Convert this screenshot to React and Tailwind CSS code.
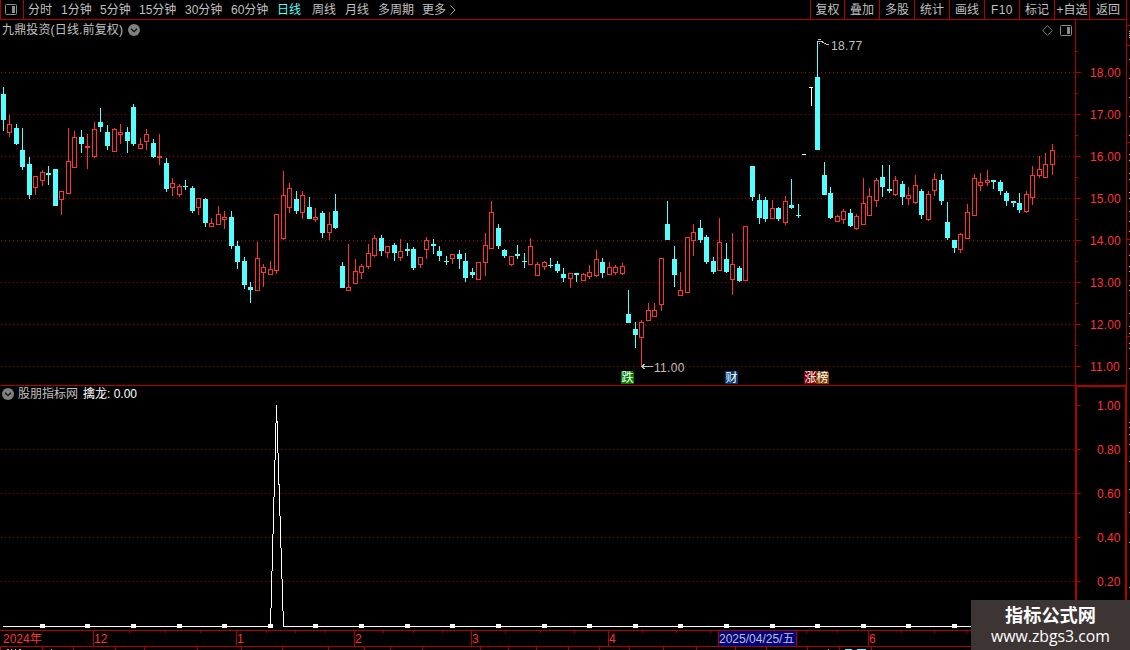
import clsx from "clsx";

// [x, high, open/close top, open/close bottom, low, rising]
const candles = [
  [3, 87, 94, 120, 131, 0], [9, 115, 124, 133, 137, 1], [16, 124, 128, 144, 145, 0], [22, 128, 150, 167, 170, 0],
  [29, 157, 164, 195, 199, 0], [35, 176, 176, 188, 195, 1], [42, 170, 172, 181, 186, 1], [48, 166, 173, 175, 185, 0],
  [55, 169, 169, 206, 206, 0], [61, 191, 191, 200, 215, 1], [68, 128, 161, 194, 194, 1], [74, 131, 137, 168, 168, 1],
  [81, 130, 137, 144, 153, 0], [87, 134, 146, 148, 169, 1], [94, 122, 129, 157, 158, 1], [100, 108, 122, 127, 132, 0],
  [107, 125, 132, 146, 150, 0], [114, 128, 129, 152, 152, 1], [120, 124, 132, 135, 144, 1], [127, 127, 132, 141, 153, 0],
  [133, 104, 107, 144, 146, 0], [140, 138, 144, 149, 149, 1], [146, 129, 134, 142, 150, 1], [153, 139, 143, 157, 158, 0],
  [159, 134, 156, 158, 165, 1], [166, 158, 163, 189, 192, 0], [172, 178, 183, 188, 196, 1], [179, 184, 186, 195, 197, 1],
  [185, 180, 186, 187, 190, 0], [192, 186, 188, 211, 213, 0], [198, 198, 198, 208, 215, 1], [205, 198, 199, 223, 227, 0],
  [211, 218, 223, 227, 227, 1], [218, 206, 214, 225, 225, 1], [224, 211, 217, 220, 229, 1], [231, 211, 217, 246, 249, 0],
  [237, 241, 246, 262, 269, 0], [244, 257, 261, 285, 289, 0], [250, 282, 287, 290, 303, 0], [257, 242, 258, 291, 291, 1],
  [263, 264, 267, 273, 287, 1], [270, 261, 269, 275, 275, 1], [276, 214, 214, 271, 274, 1], [283, 171, 195, 239, 240, 1],
  [289, 183, 188, 208, 213, 1], [296, 191, 199, 211, 214, 0], [302, 191, 195, 213, 219, 1], [309, 197, 207, 219, 219, 0],
  [315, 208, 217, 220, 222, 1], [322, 211, 213, 233, 238, 0], [329, 212, 224, 233, 240, 1], [335, 194, 211, 228, 229, 0],
  [342, 262, 266, 288, 288, 0], [348, 244, 287, 291, 291, 1], [355, 259, 271, 284, 284, 1], [361, 264, 266, 273, 279, 1],
  [368, 244, 253, 267, 269, 1], [374, 235, 238, 256, 257, 1], [381, 235, 238, 251, 256, 0], [387, 246, 246, 253, 258, 1],
  [394, 243, 245, 253, 261, 0], [400, 239, 251, 258, 261, 1], [407, 243, 249, 251, 256, 0], [413, 247, 249, 268, 270, 0],
  [420, 257, 257, 265, 268, 1], [426, 237, 240, 250, 259, 1], [433, 239, 244, 246, 254, 0], [439, 246, 251, 256, 261, 0],
  [446, 256, 261, 262, 265, 0], [452, 254, 254, 259, 264, 1], [459, 250, 254, 259, 269, 0], [465, 253, 261, 278, 282, 0],
  [472, 268, 272, 275, 278, 0], [478, 262, 262, 280, 280, 1], [485, 233, 245, 263, 276, 1], [491, 201, 212, 249, 249, 1],
  [498, 224, 228, 246, 249, 0], [504, 249, 250, 256, 258, 0], [511, 256, 256, 265, 266, 1], [517, 245, 254, 256, 259, 0],
  [524, 253, 261, 262, 268, 0], [530, 238, 246, 265, 265, 1], [537, 262, 264, 276, 276, 1], [544, 261, 262, 267, 270, 1],
  [550, 258, 265, 266, 268, 0], [557, 261, 264, 271, 273, 0], [563, 268, 274, 278, 282, 0], [570, 273, 273, 279, 288, 1],
  [576, 273, 273, 275, 282, 0], [583, 273, 274, 281, 281, 1], [589, 265, 272, 277, 279, 1], [596, 250, 259, 276, 277, 1],
  [602, 258, 262, 273, 278, 0], [609, 262, 267, 275, 275, 1], [615, 265, 267, 273, 275, 1], [622, 263, 266, 274, 275, 1],
  [628, 290, 314, 323, 323, 0], [635, 322, 329, 335, 348, 0], [641, 320, 322, 338, 367, 1], [648, 303, 310, 321, 321, 1],
  [654, 303, 310, 317, 317, 1], [661, 258, 258, 305, 311, 1], [667, 201, 224, 240, 240, 0], [674, 246, 259, 275, 287, 0],
  [680, 272, 290, 296, 296, 1], [687, 237, 237, 293, 293, 1], [693, 224, 232, 241, 256, 1], [700, 220, 228, 240, 243, 0],
  [706, 235, 237, 262, 264, 0], [713, 257, 261, 272, 274, 0], [719, 218, 242, 271, 271, 1], [726, 243, 259, 272, 273, 0],
  [732, 233, 264, 280, 295, 1], [739, 266, 268, 281, 282, 0], [745, 226, 226, 281, 281, 1], [752, 166, 166, 197, 201, 0],
  [759, 194, 200, 218, 224, 0], [765, 197, 200, 219, 222, 0], [772, 200, 208, 219, 219, 1], [778, 207, 208, 219, 221, 0],
  [785, 196, 201, 223, 225, 1], [791, 179, 205, 208, 209, 0], [798, 204, 215, 216, 218, 0], [817, 41, 77, 150, 150, 0],
  [824, 162, 175, 195, 195, 0], [830, 187, 193, 218, 219, 0], [837, 215, 216, 222, 222, 1], [843, 209, 211, 220, 224, 1],
  [850, 209, 213, 226, 227, 0], [856, 214, 216, 229, 230, 1], [863, 178, 203, 225, 225, 1], [869, 188, 196, 216, 216, 1],
  [876, 178, 180, 201, 207, 1], [882, 165, 177, 187, 197, 0], [889, 165, 189, 191, 193, 0], [895, 176, 180, 195, 196, 1],
  [902, 181, 184, 197, 205, 0], [908, 187, 195, 199, 205, 1], [915, 175, 185, 203, 204, 1], [921, 189, 191, 215, 219, 0],
  [928, 191, 194, 220, 221, 1], [934, 173, 179, 191, 196, 1], [941, 174, 180, 201, 205, 0], [947, 202, 222, 238, 240, 0],
  [954, 240, 240, 248, 253, 0], [960, 233, 234, 250, 253, 1], [967, 204, 212, 239, 239, 1], [974, 174, 178, 216, 216, 1],
  [980, 173, 182, 186, 191, 1], [987, 170, 180, 183, 186, 1], [993, 180, 180, 182, 189, 0], [1000, 180, 182, 191, 195, 0],
  [1006, 191, 193, 201, 206, 0], [1013, 201, 201, 203, 207, 0], [1019, 193, 203, 210, 213, 0], [1026, 191, 194, 212, 213, 1],
  [1032, 166, 175, 198, 205, 1], [1039, 156, 169, 176, 178, 1], [1045, 153, 164, 178, 178, 1], [1052, 144, 150, 165, 175, 1],
];

const periods = [
  ["分时", "w-[33px]"],
  ["1分钟", "w-[39px]"],
  ["5分钟", "w-[39px]"],
  ["15分钟", "w-[46px]"],
  ["30分钟", "w-[46px]"],
  ["60分钟", "w-[46px]"],
  ["日线", "w-[35px]"],
  ["周线", "w-[33px]"],
  ["月线", "w-[33px]"],
  ["多周期", "w-[44px]"],
  ["更多", "w-[27px]"],
];

const tools = [
  ["复权", "w-[34px]"],
  ["叠加", "w-[35px]"],
  ["多股", "w-[35px]"],
  ["统计", "w-[35px]"],
  ["画线", "w-[35px]"],
  ["F10", "w-[35px] tracking-[0.4px]"],
  ["标记", "w-[35px]"],
  ["+自选", "w-[35px]"],
  ["返回", "w-[37px]"],
];

const prices = ["18.00", "17.00", "16.00", "15.00", "14.00", "13.00", "12.00", "11.00"];
const levels = ["1.00", "0.80", "0.60", "0.40", "0.20"];

const months = [
  ["2024年", "w-[93px] pl-[3px]"],
  ["12", "w-[143px] border-l"],
  ["1", "w-[118px] border-l"],
  ["2", "w-[117px] border-l"],
  ["3", "w-[137px] border-l"],
  ["4", "w-[110px] border-l"],
  ["2025/04/25/五", "w-[79px] border-x bg-[#000080] text-[#c0c0c0]"],
  ["", "w-[71px]"],
  ["6", "w-[102px] border-l"],
];

const weekTicks = [129, 165, 200, 266, 295, 325, 383, 413, 442, 505, 540, 574, 642, 676, 710, 806, 837, 901, 934, 966];
const lowerTicks = [
  0, 42, 73, 115, 144, 197, 241, 282, 328, 364, 390, 422, 480, 508, 536, 568, 599, 629, 663, 696, 735, 766, 807, 839, 871,
];
const markers = [
  42, 87, 133, 179, 224, 270, 315, 361, 407, 452, 498, 544, 589, 635, 680, 726, 772, 817, 863, 908, 954,
];

const badges = [
  { x: 621, text: "跌", fill: "#008000" },
  { x: 725, text: "财", fill: "#003c70" },
  { x: 804, text: "涨", fill: "#800000" },
  { x: 816, text: "榜", fill: "#804000" },
];

const RED = "#b00000";
const UP = "#ff3232";
const DOWN = "#54ffff";

export default function App() {
  return (
    <div className="flex h-[650px] w-[1130px] flex-col overflow-hidden bg-black font-['Liberation_Sans','Noto_Sans_CJK_SC',sans-serif] text-[12px] leading-none text-[#c0c0c0]">
      <Toolbar />
      <div className="flex h-[610px] shrink-0">
        <div className="w-[1075px] shrink-0">
          <PricePane />
          <IndicatorPane />
        </div>
        <div className="w-[51px] shrink-0">
          <PriceScale />
          <LevelScale />
        </div>
        <SideStrip />
      </div>
      <TimeAxis />
    </div>
  );
}

function Toolbar() {
  return (
    <div className="flex h-5 w-[1127px] shrink-0 border-x border-b border-[#b00000]">
      <div className="flex w-[23px] items-center border-r border-[#b00000] pl-1">
        <PanelIcon />
      </div>
      <nav className="flex items-center whitespace-nowrap pl-1">
        {periods.map(([label, width]) => (
          <span key={label} className={clsx(width, label === "日线" && "text-[#54ffff]")}>
            {label}
          </span>
        ))}
        <svg width="8" height="10" viewBox="0 0 8 10" fill="none" stroke="#a0a0a0">
          <path d="M1.5 .5 6 5 1.5 9.5" />
        </svg>
      </nav>
      <div className="ml-auto flex">
        {tools.map(([label, width]) => (
          <span
            key={label}
            className={clsx(width, "flex items-center justify-center whitespace-nowrap border-l border-[#b00000]")}
          >
            {label}
          </span>
        ))}
      </div>
    </div>
  );
}

function PricePane() {
  return (
    <section className="relative h-[366px] border-b border-[#b00000]">
      <svg className="absolute inset-0" width="1075" height="365" viewBox="0 20 1075 365" shapeRendering="crispEdges">
        {prices.map((p, i) => (
          <Dots key={p} y={72 + i * 42} />
        ))}
        {candles.map((c) => (
          <Candle key={c[0]} data={c} />
        ))}
        {/* limit-up days: flat bar and a T bar */}
        <path d="M802 154.5h4M809 87.5h4M811.5 87v19" stroke="#fff" />
        <g fill="none" stroke="#c0c0c0">
          <path d="M818 41.5h3M818 39.5h3M819 43.5h1M820 41.5h3M822 42.5h2M824 43.5h2M826 44.5h3" />
          <path d="M641 366.5h12M642 365.5h2M643 364.5h2M642 367.5h2M643 368.5h2" />
        </g>
        <g fill="#c0c0c0" fontSize="12" letterSpacing="0.3">
          <text x="831" y="50">18.77</text>
          <text x="654" y="372">11.00</text>
        </g>
        {badges.map((b) => (
          <g key={b.text}>
            <path d={`M${b.x} 371h11l2 2v11h-13z`} fill={b.fill} />
            <text x={b.x + 0.5} y="382" fontSize="12" fill="#fff">
              {b.text}
            </text>
          </g>
        ))}
      </svg>
      <header className="relative flex h-5 items-center pl-0.5">
        <span className="tracking-[0.15px]">九鼎投资(日线.前复权)</span>
        <Chevron className="ml-[5px]" />
        <svg className="ml-auto" width="11" height="11" viewBox="0 0 11 11" fill="none" stroke="#808080">
          <path d="M5.5.7 10.3 5.5 5.5 10.3.7 5.5z" />
        </svg>
        <PanelIcon className="ml-[7px] mr-[3px]" />
      </header>
    </section>
  );
}

function IndicatorPane() {
  return (
    <section className="relative h-[244px]">
      <svg className="absolute inset-0" width="1075" height="244" viewBox="0 386 1075 244" shapeRendering="crispEdges">
        {[449, 493, 537, 581].map((y) => (
          <Dots key={y} y={y} />
        ))}
        <path d="M3 626.5H270.5L276.5 405L283.5 626.5H1075" fill="none" stroke="#fff" />
        {markers.map((x) => (
          <rect key={x} x={x - 2} y="624" width="5" height="4" fill="#fff" />
        ))}
      </svg>
      <header className="relative flex h-4 items-center pl-0.5">
        <Chevron />
        <span className="ml-1">股朋指标网</span>
        <span className="ml-[5px] text-white">擒龙: 0.00</span>
      </header>
    </section>
  );
}

function PriceScale() {
  return (
    <div className="relative h-[366px] border-b border-l border-[#b00000] text-[#ff3232]">
      <svg className="absolute left-0 top-0" width="8" height="365" viewBox="0 20 8 365" shapeRendering="crispEdges">
        {prices.map((p, i) => (
          <path key={p} d={`M0 ${51.5 + i * 42}h2M0 ${72.5 + i * 42}h5`} stroke={RED} />
        ))}
      </svg>
      <div className="pt-8">
        {prices.map((p) => (
          <div key={p} className="flex h-[42px] items-center pl-[14px] tracking-[0.15px]">
            {p}
          </div>
        ))}
      </div>
    </div>
  );
}

function LevelScale() {
  return (
    <div className="relative h-[244px] border-l-2 border-r border-t border-[#b00000] text-[#ff3232]">
      <svg className="absolute left-0 top-0" width="8" height="243" viewBox="0 387 8 243" shapeRendering="crispEdges">
        {levels.map((l, i) => (
          <path key={l} d={`M0 ${405.5 + i * 44}h4`} stroke={RED} />
        ))}
      </svg>
      {levels.map((l, i) => (
        <div key={l} className={clsx("flex items-center pl-[20px]", i ? "h-11" : "h-[41px] pb-[3px]")}>
          {l}
        </div>
      ))}
    </div>
  );
}

// Edge of the neighbouring quote panel
function SideStrip() {
  return (
    <svg width="4" height="610" viewBox="0 20 4 610" shapeRendering="crispEdges">
      <path d="M.5 20V630M0 25.5h4M0 45.5h4M0 142.5h4M0 239.5h4M0 336.5h4" stroke={RED} />
      <path
        d="M3.5 31v1M3.5 33v1M3.5 35v1M3.5 37v1M3.5 59v1M3.5 78v1M3.5 97v1M3.5 116v1M3.5 135v1M3.5 154v1M3.5 160v1M3.5 173v1M3.5 179v1M3.5 192v1M3.5 198v1M3.5 211v1M3.5 221v1M3.5 231v1M3.5 244v1M3.5 255v1M3.5 266v1M3.5 271v1M3.5 285v1M3.5 290v1M3.5 313v1M3.5 326v1M3.5 333v1M3.5 343v1M3.5 348v1M3.5 368v1M3.5 422v1M3.5 427v1M3.5 434v1M3.5 444v1M3.5 461v1M3.5 489v1M3.5 512v1M3.5 542v1M3.5 587v1"
        stroke="#c0c0c0"
      />
    </svg>
  );
}

function TimeAxis() {
  return (
    <footer className="relative h-5 shrink-0">
      <div className="flex h-[17px] w-[971px] border-y border-[#b00000] text-[#ff3232]">
        {months.map(([label, style]) => (
          <div key={label} className={clsx(style, "flex shrink-0 items-center whitespace-nowrap border-[#b00000]")}>
            {label}
          </div>
        ))}
      </div>
      <svg className="absolute inset-0" width="971" height="20" shapeRendering="crispEdges">
        {weekTicks.map((x) => (
          <path key={x} d={`M${x + 0.5} 1v2`} stroke={RED} />
        ))}
        {lowerTicks.map((x) => (
          <path key={x} d={`M${x + 0.5} 17v3`} stroke={RED} />
        ))}
        <path d="M7 19.5h2M11 19.5h1M15 19.5h1M19 19.5h2M51 19.5h1M828 19.5h1" stroke="#c0c0c0" />
        <path d="M845 19.5h7M857 19.5h9" stroke={DOWN} />
      </svg>
      <div className="absolute bottom-0 right-0 flex h-[50px] w-[159px] flex-col items-center bg-[#3c3534] font-['Open_Sans','Noto_Sans_CJK_SC',sans-serif] text-white">
        <span className="mt-[6px] text-[18.2px] font-bold leading-[18px]">指标公式网</span>
        <span className="mt-[3px] text-[15.8px] leading-[18px]">www.zbgs3.com</span>
      </div>
    </footer>
  );
}

function Candle({ data }) {
  const [x, high, top, bottom, low, rising] = data;
  if (!rising) {
    return (
      <g fill={DOWN}>
        <rect x={x} y={high} width="1" height={low - high} />
        <rect x={x - 2} y={top} width="5" height={bottom - top} />
      </g>
    );
  }
  return (
    <g fill={UP}>
      <rect x={x} y={high} width="1" height={top - high} />
      <rect x={x} y={bottom} width="1" height={low - bottom} />
      <rect x={x - 1.5} y={top + 0.5} width="4" height={bottom - top - 1} fill="#000" stroke={UP} />
    </g>
  );
}

function Dots({ y }) {
  return <path d={`M1 ${y + 0.5}H1075`} stroke={RED} strokeDasharray="1 3" />;
}

function Chevron({ className }) {
  return (
    <svg className={className} width="12" height="12" viewBox="0 0 12 12">
      <circle cx="6" cy="6" r="6" fill="#808080" />
      <path d="M3 4.7 6 7.7 9 4.7" fill="none" stroke="#101010" strokeWidth="1.3" />
    </svg>
  );
}

function PanelIcon({ className }) {
  return (
    <svg className={className} width="12" height="11" viewBox="0 0 12 11">
      <rect x=".5" y=".5" width="11" height="10" rx="1" fill="none" stroke="#8c8c8c" />
      <path d="M7 2h3v7H7z" fill="#8c8c8c" />
    </svg>
  );
}
